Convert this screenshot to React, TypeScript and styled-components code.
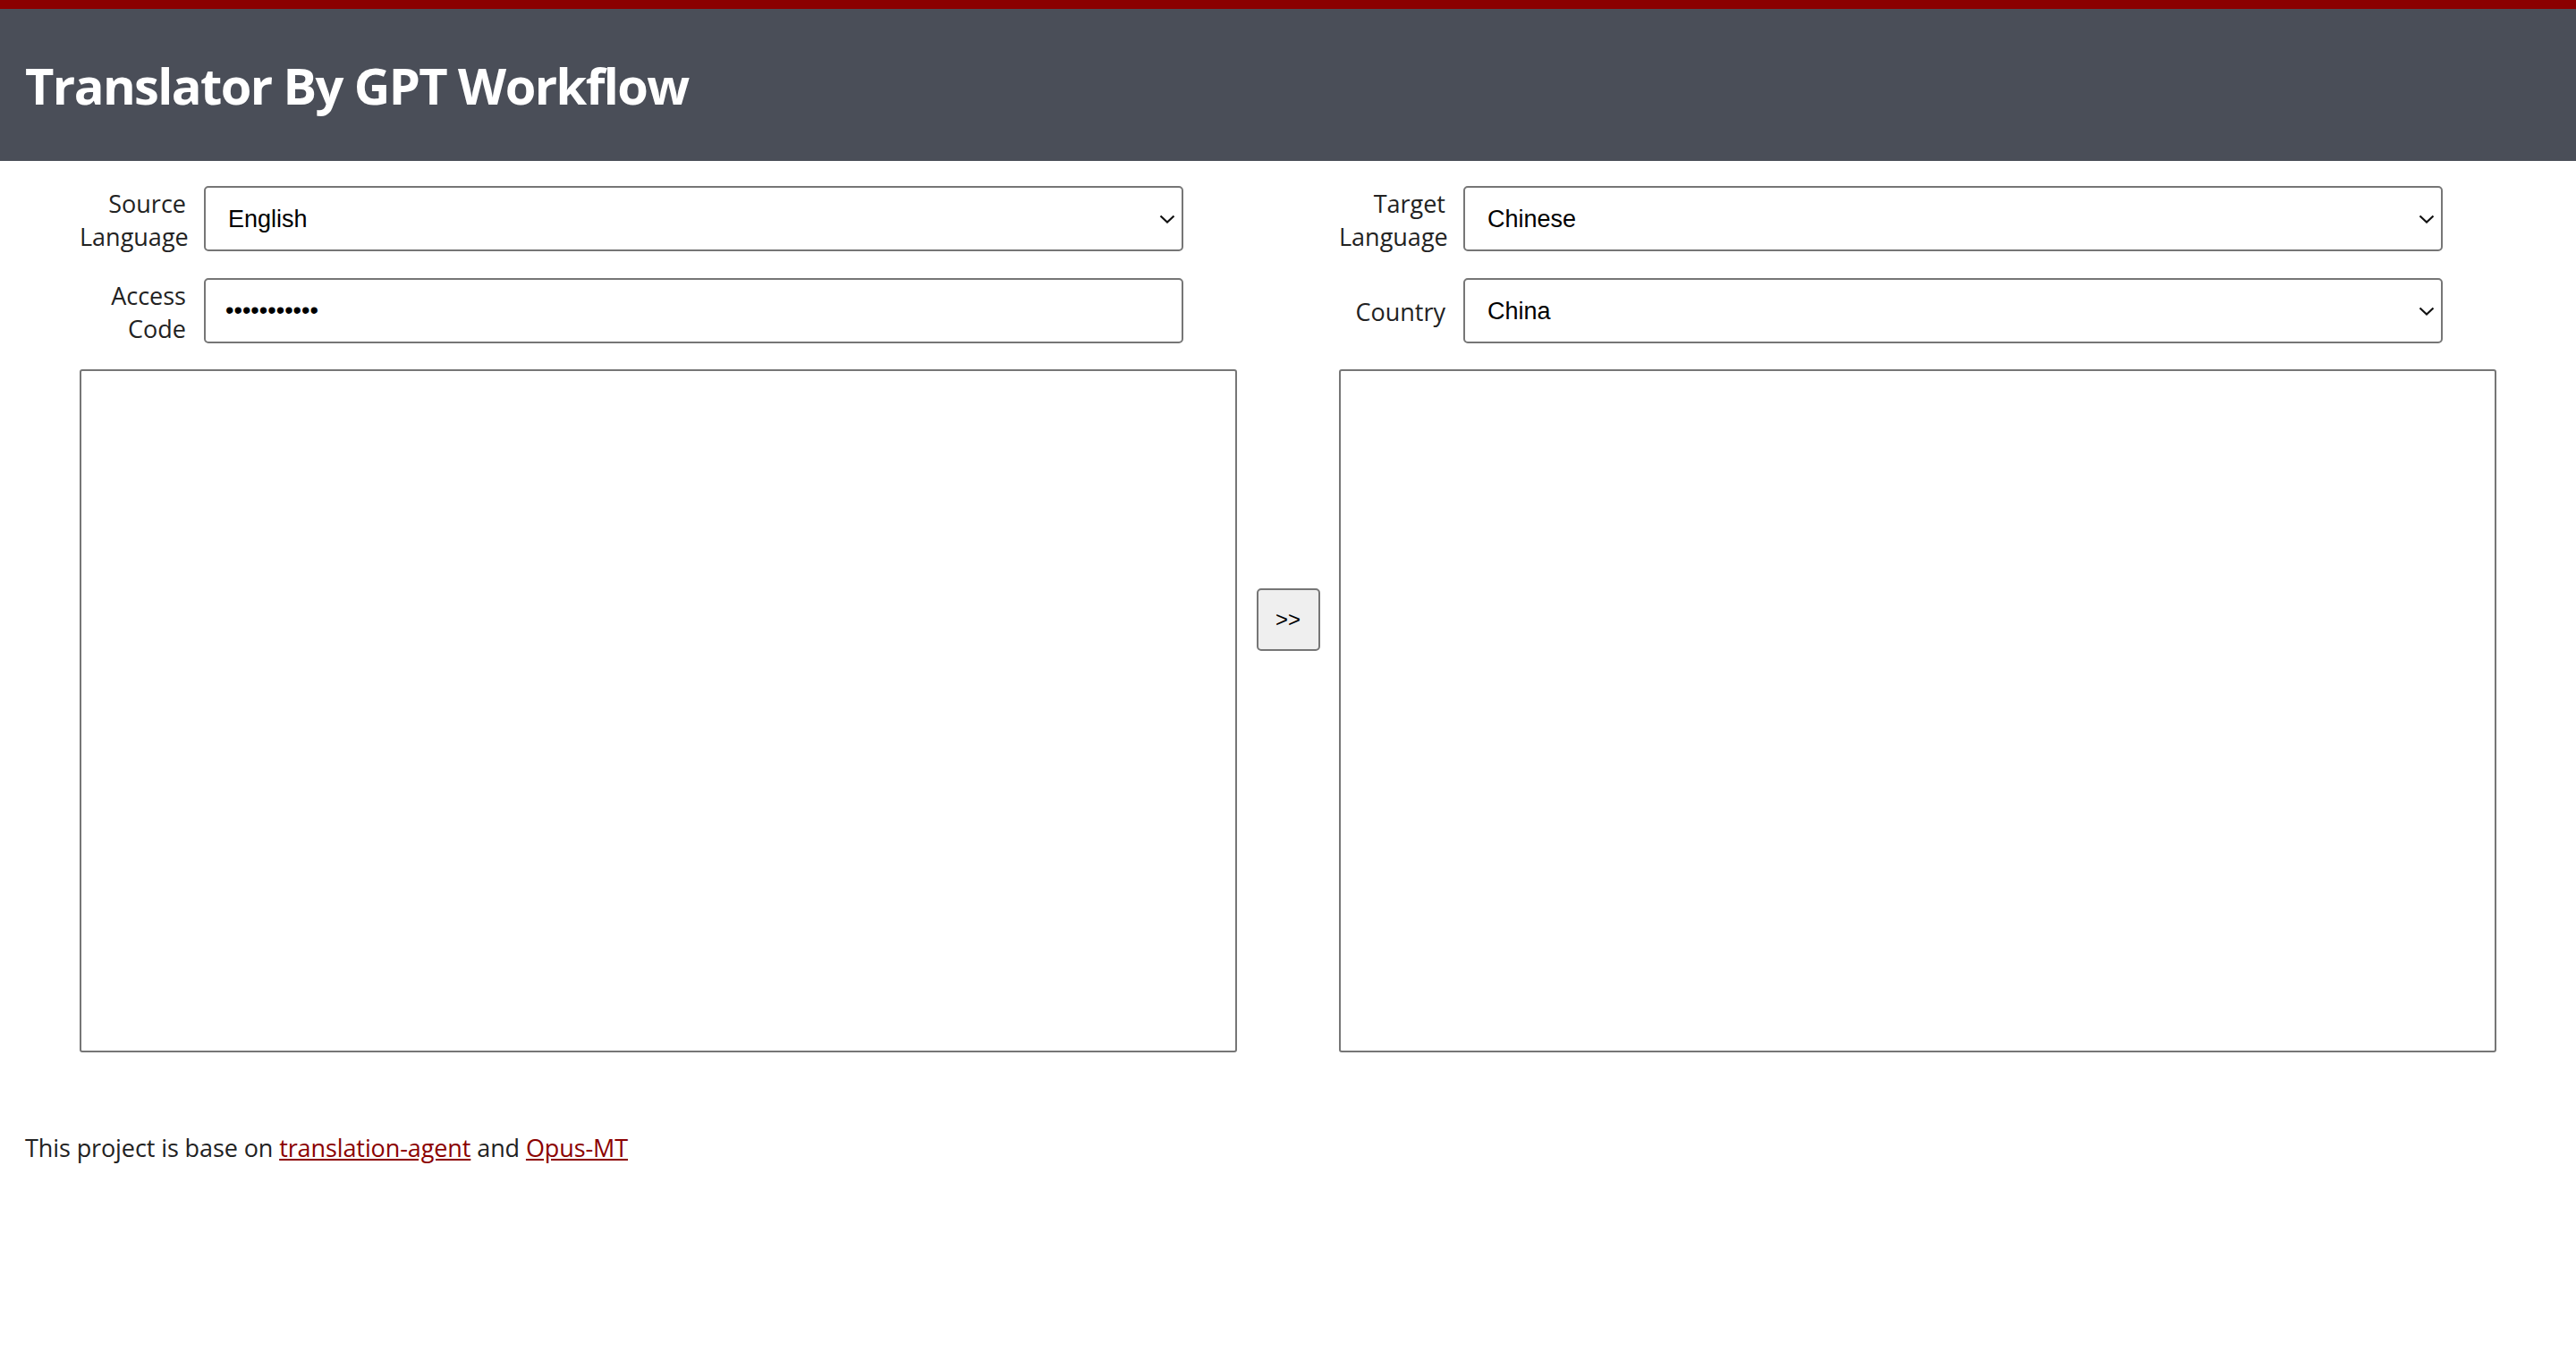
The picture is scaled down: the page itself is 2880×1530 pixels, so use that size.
import React from "react";
import styled, { createGlobalStyle } from "styled-components";

const GlobalStyle = createGlobalStyle`
  html, body {
    margin: 0;
    padding: 0;
    background: #ffffff;
  }
  body {
    font-family: "Open Sans", "Noto Sans", sans-serif;
    color: #222222;
  }
  * { box-sizing: border-box; }
`;

const TopStripe = styled.div`
  height: 10px;
  background: #8b0000;
`;

const Header = styled.header`
  height: 170px;
  background: #4a4e58;
  display: flex;
  align-items: center;
  padding-left: 28px;
`;

const Title = styled.h1`
  margin: 0;
  font-family: "Open Sans", "Noto Sans", sans-serif;
  font-weight: 700;
  font-size: 56px;
  line-height: 76px;
  color: #ffffff;
  letter-spacing: -1.6px;
`;

const Main = styled.main`
  width: 2702px;
  margin: 0 auto;
  padding-top: 28px;
  display: flex;
  flex-direction: column;
  gap: 29px;
`;

const FieldsRow = styled.div`
  display: flex;
  gap: 114px;
`;

const FieldGroup = styled.div`
  width: 1294px;
  display: grid;
  grid-template-columns: 119px 1095px;
  grid-auto-rows: 73px;
  column-gap: 20px;
  row-gap: 30px;
  align-items: center;
`;

const Label = styled.label`
  font-size: 27px;
  line-height: 37px;
  text-align: right;
  color: #222222;
  white-space: nowrap;
  padding-top: 2px;
`;

const SelectWrap = styled.div`
  position: relative;
  height: 73px;
`;

const Select = styled.select`
  appearance: none;
  -webkit-appearance: none;
  width: 100%;
  height: 73px;
  border: 2px solid #767676;
  border-radius: 5px;
  background: #ffffff;
  padding: 0 60px 0 25px;
  font-family: "Liberation Sans", Arial, sans-serif;
  font-size: 27px;
  color: #000000;
  outline: none;
`;

const Chevron = styled.svg`
  position: absolute;
  right: 9px;
  top: 50%;
  transform: translateY(-50%);
  width: 18px;
  height: 10px;
  pointer-events: none;
`;

const Input = styled.input`
  width: 100%;
  height: 73px;
  border: 2px solid #767676;
  border-radius: 5px;
  background: #ffffff;
  padding: 0 22px;
  font-family: "Liberation Sans", Arial, sans-serif;
  font-size: 27px;
  color: #000000;
  outline: none;
`;

const EditorRow = styled.div`
  display: flex;
  align-items: flex-start;
`;

const TextArea = styled.textarea`
  width: 1294px;
  height: 764px;
  border: 2px solid #767676;
  border-radius: 3px;
  padding: 4px;
  resize: none;
  font-family: "Liberation Sans", Arial, sans-serif;
  font-size: 23px;
  background: #ffffff;
  outline: none;
`;

const Middle = styled.div`
  width: 114px;
  display: flex;
  justify-content: center;
  padding-top: 245px;
`;

const TranslateButton = styled.button`
  width: 71px;
  height: 70px;
  border: 2px solid #767676;
  border-radius: 5px;
  background: #efefef;
  font-family: "Liberation Sans", Arial, sans-serif;
  font-size: 24px;
  color: #000000;
  padding: 0;
  cursor: pointer;
`;

const Footer = styled.p`
  margin: 88px 0 0;
  padding-left: 28px;
  font-size: 27px;
  line-height: 38px;
  letter-spacing: -0.1px;
  color: #222222;
`;

const Link = styled.a`
  color: #8b0000;
  text-decoration: underline;
`;

const ChevronIcon = () => (
  <Chevron viewBox="0 0 18 10">
    <path d="M1.5 1.5 L9 8.5 L16.5 1.5" fill="none" stroke="#111" strokeWidth="2.2" />
  </Chevron>
);

type SelectFieldProps = { id: string; value: string; options: string[] };

const SelectField = ({ id, value, options }: SelectFieldProps) => (
  <SelectWrap>
    <Select id={id} defaultValue={value}>
      {options.map((o) => (
        <option key={o} value={o}>
          {o}
        </option>
      ))}
    </Select>
    <ChevronIcon />
  </SelectWrap>
);

const languages = ["English", "Chinese", "Japanese", "Korean", "French", "German", "Spanish"];
const countries = ["China", "Taiwan", "Hong Kong", "Singapore"];

export default function App() {
  return (
    <>
      <GlobalStyle />
      <TopStripe />
      <Header>
        <Title>Translator By GPT Workflow</Title>
      </Header>
      <Main>
        <FieldsRow>
          <FieldGroup>
            <Label htmlFor="src">
              Source
              <br />
              Language
            </Label>
            <SelectField id="src" value="English" options={languages} />
            <Label htmlFor="code">
              Access
              <br />
              Code
            </Label>
            <Input id="code" type="password" defaultValue="abcdefghijk" />
          </FieldGroup>
          <FieldGroup>
            <Label htmlFor="tgt">
              Target
              <br />
              Language
            </Label>
            <SelectField id="tgt" value="Chinese" options={languages} />
            <Label htmlFor="country">Country</Label>
            <SelectField id="country" value="China" options={countries} />
          </FieldGroup>
        </FieldsRow>
        <EditorRow>
          <TextArea />
          <Middle>
            <TranslateButton>&gt;&gt;</TranslateButton>
          </Middle>
          <TextArea />
        </EditorRow>
      </Main>
      <Footer>
        This project is base on <Link href="#">translation-agent</Link> and{" "}
        <Link href="#">Opus-MT</Link>
      </Footer>
    </>
  );
}
